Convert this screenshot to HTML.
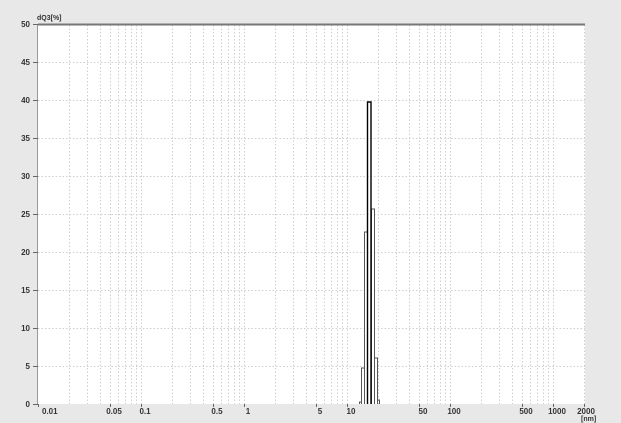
<!DOCTYPE html><html><head><style>
html,body{margin:0;padding:0;background:#e8e8e8;width:621px;height:423px;overflow:hidden}
svg{display:block}
text{font-family:"Liberation Sans",sans-serif;font-size:8px;fill:#333;font-weight:bold}
</style></head><body>
<svg id="s" width="621" height="423" xmlns="http://www.w3.org/2000/svg">
<rect x="0" y="0" width="621" height="423" fill="#e8e8e8"/>
<rect x="38" y="24" width="547" height="380" fill="#fff"/>
<g id="grid" stroke="#cfcfcf" stroke-width="1" stroke-dasharray="1.5,2"></g>
<line x1="38" y1="24.5" x2="585" y2="24.5" stroke="#777" stroke-width="2"/>
<line x1="37.5" y1="24" x2="37.5" y2="404" stroke="#999" stroke-width="1"/>
<text x="37" y="20" style="font-size:7px">dQ3[%]</text>
<g id="yl"></g><g id="xl"></g>
<g fill="none" stroke="#555" stroke-width="1">
<path d="M359.5 404 V402 H361.5 V404"/>
<path d="M361.5 404 V368 H364.5 V404"/>
<path d="M364.5 404 V232 H367.5 V404"/>
<path d="M371.5 404 V209 H374.5 V404"/>
<path d="M374.5 404 V358 H377.5 V404"/>
<path d="M377.5 404 V400 H379.5 V404"/>
</g>
<path d="M367.5 404 V102 H371 V404" fill="none" stroke="#000" stroke-width="1.4"/>
<text x="581" y="421" style="font-size:7px">[nm]</text>
</svg>
<script>
var NS="http://www.w3.org/2000/svg",g=document.getElementById('grid'),yl=document.getElementById('yl'),xl=document.getElementById('xl');
function el(p,t,a,txt){var e=document.createElementNS(NS,t);for(var k in a)e.setAttribute(k,a[k]);if(txt)e.textContent=txt;p.appendChild(e);return e;}
for(var v=5;v<50;v+=5){var y=404-v*7.6;el(g,'line',{x1:38,x2:585,y1:y+.5,y2:y+.5});}
function X(v){return 38+103*Math.log10(v/0.01);}
for(var d=0.01;d<2000;d*=10){for(var m=1;m<10;m++){var v=d*m;if(v>2000||v==0.01)continue;var x=Math.round(X(v))+.5;if(x<585)el(g,'line',{x1:x,x2:x,y1:25,y2:404});}}
for(var v=0;v<=50;v+=5){var y=404-v*7.6;el(yl,'text',{x:30,y:y+3,'text-anchor':'end'},String(v));el(yl,'line',{x1:33,x2:38,y1:y+.5,y2:y+.5,stroke:'#666'});}
[[0.01,'0.01'],[0.05,'0.05'],[0.1,'0.1'],[0.5,'0.5'],[1,'1'],[5,'5'],[10,'10'],[50,'50'],[100,'100'],[500,'500'],[1000,'1000'],[2000,'2000']].forEach(function(a){var x=X(a[0]);el(xl,'text',{x:x+(a[0]==2000?2:4),y:414,'text-anchor':a[0]==0.01?'start':'middle'},a[1]);el(xl,'line',{x1:Math.round(x)+.5,x2:Math.round(x)+.5,y1:404,y2:407,stroke:'#666'});});
</script>
</body></html>
